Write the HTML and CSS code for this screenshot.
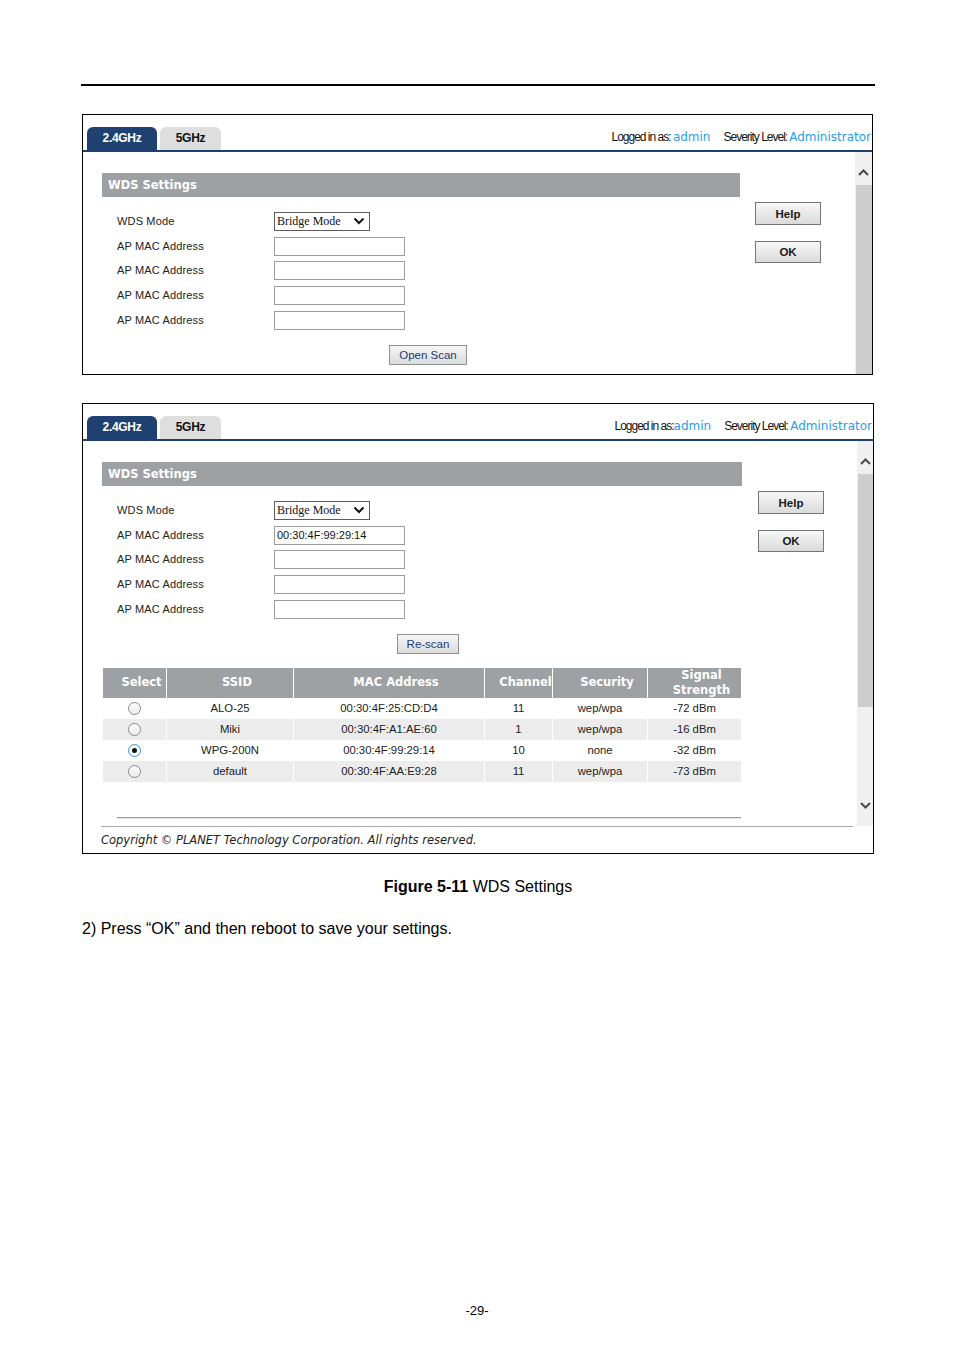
FILE: index.html
```html
<!DOCTYPE html>
<html lang="en">
<head>
<meta charset="utf-8">
<title>WDS Settings</title>
<link rel="stylesheet" href="styles.css">
</head>
<body>
<div class="page">
  <div class="top-rule"></div>

  <div class="shot shot-a">
    <div class="shot-head">
      <div class="tabs">
        <div class="tab tab-on">2.4GHz</div>
        <div class="tab tab-off">5GHz</div>
      </div>
      <div class="who"><span class="k">Logged in as: </span><span class="v">admin</span><span class="k sev">Severity Level:</span><span class="v v2">Administrator</span></div>
    </div>
    <div class="shot-body">
      <div class="main">
        <div class="settings">
          <div class="bar">WDS Settings</div>
          <div class="form">
            <div class="row"><span class="lbl">WDS Mode</span><div class="select"><span>Bridge Mode</span><svg width="12" height="8" viewBox="0 0 12 8"><path d="M1.5 1.5 L6 6 L10.5 1.5" fill="none" stroke="#111" stroke-width="2"/></svg></div></div>
            <div class="row"><span class="lbl">AP MAC Address</span><div class="field"></div></div>
            <div class="row"><span class="lbl">AP MAC Address</span><div class="field"></div></div>
            <div class="row"><span class="lbl">AP MAC Address</span><div class="field"></div></div>
            <div class="row"><span class="lbl">AP MAC Address</span><div class="field"></div></div>
          </div>
          <div class="scan-row"><button class="btn-scan">Open Scan</button></div>
        </div>
        <div class="actions">
          <button class="btn">Help</button>
          <button class="btn btn-ok">OK</button>
        </div>
      </div>
      <div class="scrollbar">
        <div class="sb-up"><svg width="11" height="7" viewBox="0 0 11 7"><path d="M1 6 L5.5 1.5 L10 6" fill="none" stroke="#4a4a4a" stroke-width="2"/></svg></div>
        <div class="thumb thumb-a"></div>
      </div>
    </div>
  </div>

  <div class="shot shot-b">
    <div class="shot-head">
      <div class="tabs">
        <div class="tab tab-on">2.4GHz</div>
        <div class="tab tab-off">5GHz</div>
      </div>
      <div class="who"><span class="k">Logged in as:</span><span class="v">admin</span><span class="k sev">Severity Level: </span><span class="v">Administrator</span></div>
    </div>
    <div class="shot-body">
      <div class="main">
        <div class="settings">
          <div class="bar">WDS Settings</div>
          <div class="form">
            <div class="row"><span class="lbl">WDS Mode</span><div class="select"><span>Bridge Mode</span><svg width="12" height="8" viewBox="0 0 12 8"><path d="M1.5 1.5 L6 6 L10.5 1.5" fill="none" stroke="#111" stroke-width="2"/></svg></div></div>
            <div class="row"><span class="lbl">AP MAC Address</span><div class="field">00:30:4F:99:29:14</div></div>
            <div class="row"><span class="lbl">AP MAC Address</span><div class="field"></div></div>
            <div class="row"><span class="lbl">AP MAC Address</span><div class="field"></div></div>
            <div class="row"><span class="lbl">AP MAC Address</span><div class="field"></div></div>
          </div>
          <div class="scan-row"><button class="btn-scan">Re-scan</button></div>
          <table class="scan">
            <colgroup>
              <col class="c1"><col class="c2"><col class="c3"><col class="c4"><col class="c5"><col class="c6">
            </colgroup>
            <thead>
              <tr><th><span>Select</span></th><th><span>SSID</span></th><th><span>MAC Address</span></th><th><span>Channel</span></th><th><span>Security</span></th><th><span>Signal<br>Strength</span></th></tr>
            </thead>
            <tbody>
              <tr><td><span class="radio"></span></td><td>ALO-25</td><td>00:30:4F:25:CD:D4</td><td>11</td><td>wep/wpa</td><td>-72 dBm</td></tr>
              <tr class="alt"><td><span class="radio"></span></td><td>Miki</td><td>00:30:4F:A1:AE:60</td><td>1</td><td>wep/wpa</td><td>-16 dBm</td></tr>
              <tr><td><span class="radio on"></span></td><td>WPG-200N</td><td>00:30:4F:99:29:14</td><td>10</td><td>none</td><td>-32 dBm</td></tr>
              <tr class="alt"><td><span class="radio"></span></td><td>default</td><td>00:30:4F:AA:E9:28</td><td>11</td><td>wep/wpa</td><td>-73 dBm</td></tr>
            </tbody>
          </table>
          <hr class="sep">
        </div>
        <div class="actions">
          <button class="btn">Help</button>
          <button class="btn btn-ok">OK</button>
        </div>
      </div>
      <div class="scrollbar">
        <div class="sb-up"><svg width="11" height="7" viewBox="0 0 11 7"><path d="M1 6 L5.5 1.5 L10 6" fill="none" stroke="#4a4a4a" stroke-width="2"/></svg></div>
        <div class="thumb thumb-b"></div>
        <div class="track"></div>
        <div class="sb-down"><svg width="11" height="7" viewBox="0 0 11 7"><path d="M1 1 L5.5 5.5 L10 1" fill="none" stroke="#4a4a4a" stroke-width="2"/></svg></div>
      </div>
    </div>
    <div class="copy">Copyright © PLANET Technology Corporation. All rights reserved.</div>
  </div>

  <p class="caption"><b>Figure 5-11</b> WDS Settings</p>
  <p class="para">2) Press “OK” and then reboot to save your settings.</p>
  <div class="pageno">-29-</div>
</div>
</body>
</html>
```

FILE: styles.css
```css
* { box-sizing: border-box; }
html, body { margin: 0; padding: 0; background: #fff; }
body { font-family: "Liberation Sans", Arial, sans-serif; color: #000; }

.page { width: 794px; margin-left: 81px; padding-top: 84px; }
.top-rule { height: 2px; background: #000; }

.shot { border: 1px solid #000; margin-left: 1px; margin-top: 28px; background: #fff; }
.shot-a { width: 791px; }
.shot-b { width: 792px; }

.shot-head {
  height: 37px;
  border-bottom: 2px solid #1f3f6e;
  display: flex;
  justify-content: space-between;
  align-items: flex-end;
  padding: 0 1px 0 4px;
}
.tabs { display: flex; gap: 3px; }
.tab {
  height: 23px; line-height: 23px; text-align: center;
  font-size: 12px; font-weight: bold; letter-spacing: -0.3px;
  border-radius: 6px 6px 0 0;
}
.tab-on { width: 70px; background: #1f4172; color: #fff; }
.tab-off { width: 61px; background: #dedede; color: #111; }

.who { font-size: 12px; line-height: 14px; margin-bottom: 6px; white-space: nowrap; }
.who .k { letter-spacing: -1px; color: #111; }
.who .v { font-family: "DejaVu Sans", Verdana, sans-serif; color: #2a9de6; }
.who .sev { margin-left: 13px; }
.who .v2 { margin-left: 2px; }

.shot-body { display: flex; }
.shot-a .shot-body { height: 222px; }
.shot-b .shot-body { height: 385px; }

.main { flex: 1; display: flex; align-items: flex-start; padding: 21px 0 0 19px; overflow: hidden; }
.settings { width: 638px; }
.shot-b .settings { width: 640px; }

.bar {
  height: 24px; background: #9ea1a3; color: #fff;
  font: bold 11.5px "DejaVu Sans", Verdana, sans-serif; line-height: 24px; padding-left: 6px;
}
.form { margin-top: 12px; padding-left: 15px; }
.row { height: 24.7px; display: flex; align-items: center; }
.lbl { width: 157px; font-size: 11px; line-height: 13px; letter-spacing: 0.15px; color: #222; }
.select {
  width: 96px; height: 19px; border: 1px solid #5c5c5c;
  display: flex; align-items: center; justify-content: space-between;
  padding: 0 4px 0 2px;
  font: 12px "Liberation Serif", "Times New Roman", serif; color: #111;
}
.field {
  width: 131px; height: 19px; border: 1px solid #9c9c9c;
  font-size: 11px; line-height: 17px; padding: 0 2px; color: #111;
}

.scan-row { margin: 12.5px 0 0 15px; width: 622px; display: flex; justify-content: center; }
.btn-scan {
  height: 20px; padding: 0 9px; border: 1px solid #8f8f8f;
  background: linear-gradient(#f6f6f6, #dcdcdc);
  font: 11.5px "Liberation Sans", Arial, sans-serif; color: #1c3b78;
}

.actions { display: flex; flex-direction: column; gap: 16px; margin: 29px 0 0 15px; }
.shot-b .actions { margin-left: 16px; }
.btn {
  width: 66px; height: 23px; padding: 0; border: 1px solid #767676;
  background: linear-gradient(#f7f7f7, #dadada);
  font: bold 11.5px "Liberation Sans", Arial, sans-serif; color: #1a1a1a;
}
.btn-ok { height: 22px; }

.scrollbar { display: flex; flex-direction: column; background: #f0f0f0; }
.shot-a .scrollbar { width: 17px; }
.shot-b .scrollbar { width: 16px; }
.sb-up { height: 33px; display: flex; justify-content: center; padding-top: 17px; }
.thumb { background: #cdcdcd; margin-left: 1px; }
.thumb-a { flex: 1; }
.thumb-b { height: 233px; }
.track { flex: 1; }
.sb-down { height: 33px; display: flex; justify-content: center; padding-top: 9px; }

.scan { margin-top: 14px; width: 640px; table-layout: fixed; border-collapse: separate; border-spacing: 1px 0; }
.scan .c1 { width: 63px; }
.scan .c2 { width: 126px; }
.scan .c3 { width: 190px; }
.scan .c4 { width: 67px; }
.scan .c5 { width: 94px; }
.scan .c6 { width: 93px; }
.scan th {
  height: 30px; padding: 0; background: #9ea1a3; color: #fff;
  font: bold 11.5px "DejaVu Sans", Verdana, sans-serif; line-height: 15px; text-align: center;
}
.scan th span { display: block; padding-left: 14px; white-space: nowrap; }
.scan td {
  height: 21px; padding: 0; text-align: center;
  font-size: 11.3px; line-height: 13px; color: #222;
}
.scan tr.alt td { background: #ececec; }
.radio {
  display: inline-block; width: 13px; height: 13px; border-radius: 50%;
  border: 1px solid #8a8a8a; background: linear-gradient(#fdfdfd, #ececec);
  vertical-align: middle; position: relative;
}
.radio.on { border-color: #3b8fdf; background: #fff; }
.radio.on::after {
  content: ""; position: absolute; left: 3px; top: 3px;
  width: 5px; height: 5px; border-radius: 50%; background: #111;
}

.sep {
  margin: 35px 0 0 15px; width: 624px; height: 0;
  border: 0; border-top: 1px solid #9b9b9b; border-bottom: 1px solid #e6e6e6;
}

.copy {
  margin: 0 20px 0 18px; border-top: 1px solid #a9a9a9;
  height: 27px;
  font: italic 11.5px "DejaVu Sans", Verdana, sans-serif; line-height: 26px; color: #222;
}

.caption { margin: 24px 0 0; font-size: 16px; line-height: 18px; text-align: center; }
.para { margin: 24px 0 0 1px; font-size: 16px; line-height: 18px; }
.pageno { margin-top: 365px; text-align: center; font-size: 13px; line-height: 16px; padding-right: 2px; }
```
